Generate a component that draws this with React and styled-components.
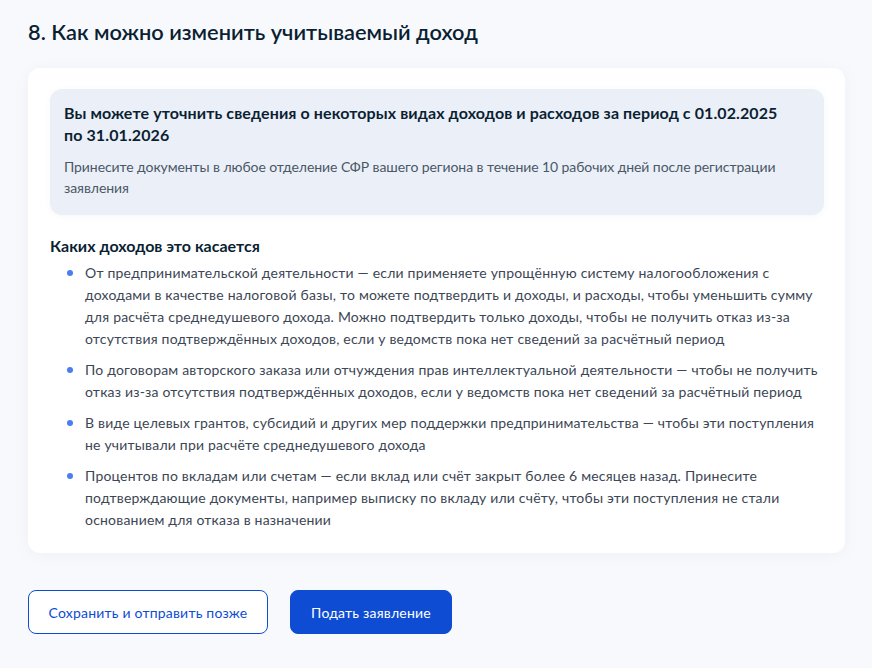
import React from "react";
import styled, { createGlobalStyle } from "styled-components";

const Global = createGlobalStyle`
  html, body { margin: 0; padding: 0; background: #f8f9fc; }
  body { font-family: Lato, "Noto Sans", sans-serif; color: #0b1f33; }
`;

const Page = styled.div`
  padding: 17px 27px 0 28px;
  display: flex;
  flex-direction: column;
`;

const Title = styled.h2`
  margin: 0;
  font-size: 21.8px;
  line-height: 30px;
  font-weight: 600;
  color: #0b1f33;
`;

const Card = styled.section`
  margin-top: 21px;
  background: #fff;
  border-radius: 12px;
  box-shadow: 0 2px 14px rgba(120, 140, 180, 0.08);
  padding: 21px 21px 22px 22px;
  display: flex;
  flex-direction: column;
`;

const Info = styled.div`
  background: #ebf0f8;
  border-radius: 12px;
  padding: 13px 16px 17px 14px;
  box-shadow: 0 1px 6px rgba(100, 120, 160, 0.06);
`;

const InfoTitle = styled.div`
  max-width: 725px;
  font-size: 16px;
  line-height: 22px;
  font-weight: 700;
  letter-spacing: 0.1px;
  color: #0b1f33;
`;

const InfoText = styled.div`
  margin-top: 10px;
  font-size: 14px;
  line-height: 21px;
  letter-spacing: -0.08px;
  color: #4a5766;
`;

const Subtitle = styled.h3`
  margin: 20px 0 0;
  font-size: 16px;
  line-height: 22px;
  font-weight: 700;
  color: #0b1f33;
`;

const List = styled.ul`
  margin: 5px 0 0;
  padding: 0 0 0 35px;
  list-style: none;
  display: flex;
  flex-direction: column;
  gap: 9px;
`;

const Item = styled.li`
  position: relative;
  font-size: 14px;
  line-height: 22px;
  letter-spacing: 0.2px;
  color: #3c4654;
  &::before {
    content: "";
    position: absolute;
    left: -18px;
    top: 8px;
    width: 6px;
    height: 6px;
    border-radius: 50%;
    background: #4a7df0;
  }
`;

const Actions = styled.div`
  margin-top: 37px;
  display: flex;
  gap: 22px;
`;

const Button = styled.button`
  height: 44px;
  padding: 0;
  border-radius: 8px;
  font-family: Lato, "Noto Sans", sans-serif;
  font-size: 14px;
  letter-spacing: 0.2px;
  cursor: pointer;
  border: 1px solid #0d4cd3;
  background: ${(p) => (p.$primary ? "#0d4cd3" : "#fff")};
  color: ${(p) => (p.$primary ? "#fff" : "#0d4cd3")};
  width: ${(p) => (p.$primary ? "162px" : "240px")};
`;

const items = [
  "От предпринимательской деятельности — если применяете упрощённую систему налогообложения с доходами в качестве налоговой базы, то можете подтвердить и доходы, и расходы, чтобы уменьшить сумму для расчёта среднедушевого дохода. Можно подтвердить только доходы, чтобы не получить отказ из-за отсутствия подтверждённых доходов, если у ведомств пока нет сведений за расчётный период",
  "По договорам авторского заказа или отчуждения прав интеллектуальной деятельности — чтобы не получить отказ из-за отсутствия подтверждённых доходов, если у ведомств пока нет сведений за расчётный период",
  "В виде целевых грантов, субсидий и других мер поддержки предпринимательства — чтобы эти поступления не учитывали при расчёте среднедушевого дохода",
  "Процентов по вкладам или счетам — если вклад или счёт закрыт более 6 месяцев назад. Принесите подтверждающие документы, например выписку по вкладу или счёту, чтобы эти поступления не стали основанием для отказа в назначении",
];

export default function App() {
  return (
    <>
      <Global />
      <Page>
        <Title>8. Как можно изменить учитываемый доход</Title>
        <Card>
          <Info>
            <InfoTitle>
              Вы можете уточнить сведения о некоторых видах доходов и расходов за период с 01.02.2025 по 31.01.2026
            </InfoTitle>
            <InfoText>
              Принесите документы в любое отделение СФР вашего региона в течение 10 рабочих дней после регистрации заявления
            </InfoText>
          </Info>
          <Subtitle>Каких доходов это касается</Subtitle>
          <List>
            {items.map((t, i) => (
              <Item key={i}>{t}</Item>
            ))}
          </List>
        </Card>
        <Actions>
          <Button>Сохранить и отправить позже</Button>
          <Button $primary>Подать заявление</Button>
        </Actions>
      </Page>
    </>
  );
}
